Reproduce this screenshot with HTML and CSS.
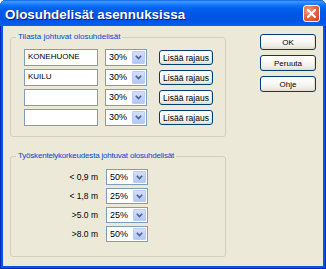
FILE: index.html
```html
<!DOCTYPE html>
<html lang="fi">
<head>
<meta charset="utf-8">
<title>Olosuhdelisät asennuksissa</title>
<link rel="stylesheet" href="styles.css">
</head>
<body>
<div class="window">
  <div class="titlebar">
    <span class="title">Olosuhdelisät asennuksissa</span>
    <button class="close" aria-label="Sulje">
      <svg width="9" height="9" viewBox="0 0 9 9"><path d="M1 1 L8 8 M8 1 L1 8" stroke="#fff" stroke-width="2" stroke-linecap="square"/></svg>
    </button>
  </div>
  <div class="client">
    <div class="main">
      <fieldset class="group g1">
        <legend>Tilasta johtuvat olosuhdelisät</legend>
        <div class="row">
          <input class="text" value="KONEHUONE">
          <div class="combo"><span class="val">30%</span><span class="drop"><svg width="7" height="5" viewBox="0 0 7 5"><path d="M0.8 0.8 L3.5 3.5 L6.2 0.8" fill="none" stroke="#4D6185" stroke-width="1.6"/></svg></span></div>
          <button class="btn small">Lisää rajaus</button>
        </div>
        <div class="row">
          <input class="text" value="KUILU">
          <div class="combo"><span class="val">30%</span><span class="drop"><svg width="7" height="5" viewBox="0 0 7 5"><path d="M0.8 0.8 L3.5 3.5 L6.2 0.8" fill="none" stroke="#4D6185" stroke-width="1.6"/></svg></span></div>
          <button class="btn small">Lisää rajaus</button>
        </div>
        <div class="row">
          <input class="text" value="">
          <div class="combo"><span class="val">30%</span><span class="drop"><svg width="7" height="5" viewBox="0 0 7 5"><path d="M0.8 0.8 L3.5 3.5 L6.2 0.8" fill="none" stroke="#4D6185" stroke-width="1.6"/></svg></span></div>
          <button class="btn small">Lisää rajaus</button>
        </div>
        <div class="row">
          <input class="text" value="">
          <div class="combo"><span class="val">30%</span><span class="drop"><svg width="7" height="5" viewBox="0 0 7 5"><path d="M0.8 0.8 L3.5 3.5 L6.2 0.8" fill="none" stroke="#4D6185" stroke-width="1.6"/></svg></span></div>
          <button class="btn small">Lisää rajaus</button>
        </div>
      </fieldset>
      <fieldset class="group g2">
        <legend>Työskentelykorkeudesta johtuvat olosuhdelisät</legend>
        <div class="row2">
          <span class="lbl">&lt; 0,9 m</span>
          <div class="combo c2"><span class="val">50%</span><span class="drop"><svg width="7" height="5" viewBox="0 0 7 5"><path d="M0.8 0.8 L3.5 3.5 L6.2 0.8" fill="none" stroke="#4D6185" stroke-width="1.6"/></svg></span></div>
        </div>
        <div class="row2">
          <span class="lbl">&lt; 1,8 m</span>
          <div class="combo c2"><span class="val">25%</span><span class="drop"><svg width="7" height="5" viewBox="0 0 7 5"><path d="M0.8 0.8 L3.5 3.5 L6.2 0.8" fill="none" stroke="#4D6185" stroke-width="1.6"/></svg></span></div>
        </div>
        <div class="row2">
          <span class="lbl">&gt;5.0 m</span>
          <div class="combo c2"><span class="val">25%</span><span class="drop"><svg width="7" height="5" viewBox="0 0 7 5"><path d="M0.8 0.8 L3.5 3.5 L6.2 0.8" fill="none" stroke="#4D6185" stroke-width="1.6"/></svg></span></div>
        </div>
        <div class="row2">
          <span class="lbl">&gt;8.0 m</span>
          <div class="combo c2"><span class="val">50%</span><span class="drop"><svg width="7" height="5" viewBox="0 0 7 5"><path d="M0.8 0.8 L3.5 3.5 L6.2 0.8" fill="none" stroke="#4D6185" stroke-width="1.6"/></svg></span></div>
        </div>
      </fieldset>
    </div>
    <div class="side">
      <button class="btn big">OK</button>
      <button class="btn big">Peruuta</button>
      <button class="btn big">Ohje</button>
    </div>
  </div>
</div>
</body>
</html>
```

FILE: styles.css
```css
* { box-sizing: border-box; }
html, body { margin: 0; padding: 0; background: #ffffff; }
body { font-family: "Liberation Sans", Arial, sans-serif; font-size: 8px; color: #000; }

.window {
  width: 326px;
  height: 269px;
  display: flex;
  flex-direction: column;
  background: #0055E8;
  border-radius: 6px 6px 0 0;
  box-shadow: inset 1px 0 0 #0029B8, inset -1px 0 0 #0029B8, inset 0 -1px 0 #0029B8;
  overflow: hidden;
}

.titlebar {
  height: 26px;
  flex: none;
  display: flex;
  align-items: center;
  justify-content: space-between;
  padding: 0 6px 0 5px;
  background: linear-gradient(to bottom, #0A5FE8 0%, #3D95FF 6%, #2A8AFF 12%, #0E74FB 20%, #0063EE 32%, #0058E6 50%, #0055E3 78%, #005AEC 90%, #0062F6 100%);
}

.title {
  font-family: "Liberation Sans", Arial, sans-serif;
  font-weight: bold;
  font-size: 13.4px;
  color: #fff;
  text-shadow: 1px 1px 0 #0A1E80;
  padding-top: 2px;
}

.close {
  width: 17px;
  height: 17px;
  padding: 0;
  margin-top: 1px;
  border: 1px solid #fff;
  border-radius: 3px;
  background: radial-gradient(circle at 30% 30%, #F0A27F 0%, #E26A45 45%, #C7401F 100%);
  display: flex;
  align-items: center;
  justify-content: center;
}

.client {
  flex: 1;
  margin: 0 3px 3px 3px;
  background: #ECE9D8;
  display: flex;
  justify-content: space-between;
  padding: 6px 7px 9px 7px;
}

.main {
  width: 216px;
  display: flex;
  flex-direction: column;
  gap: 14px;
}

.group {
  margin: 0;
  border: 1px solid #D0D0BF;
  border-radius: 3px;
  min-width: 0;
}

.group legend {
  color: #0046D5;
  font-size: 8px;
  line-height: 10px;
  padding: 0 2px;
  margin-left: -8px;
}

.g2 legend { letter-spacing: -0.2px; }

.g1 {
  padding: 7px 0 10px 13px;
  display: flex;
  flex-direction: column;
  gap: 3px;
}

.g2 {
  flex: 1;
  padding: 8px 0 0 13px;
  display: flex;
  flex-direction: column;
  gap: 3px;
}

.row {
  height: 17px;
  display: flex;
  align-items: center;
}

.text {
  width: 74px;
  height: 17px;
  border: 1px solid #7F9DB9;
  background: #fff;
  font-family: "Liberation Sans", Arial, sans-serif;
  font-size: 8px;
  padding: 0 0 2px 3px;
  margin: 0 7px 0 0;
  color: #000;
  outline: none;
}

.combo {
  width: 42px;
  height: 17px;
  border: 1px solid #7F9DB9;
  background: #fff;
  display: flex;
  align-items: stretch;
  justify-content: space-between;
  padding: 1px;
}

.combo .val {
  padding-left: 2px;
  line-height: 13px;
  font-size: 9px;
}

.combo .drop {
  width: 13px;
  border-radius: 1px;
  background: linear-gradient(to bottom, #D3E0FC 0%, #C1D3FB 50%, #B2C7F6 100%);
  border: 1px solid #B9CCF6;
  display: flex;
  align-items: center;
  justify-content: center;
}

.c2 { height: 16px; }
.c2 .val { line-height: 12px; }

.btn {
  font-family: "Liberation Sans", Arial, sans-serif;
  font-size: 8px;
  color: #000;
  padding: 0;
  border: 1px solid #003C74;
  border-radius: 3px;
  background: linear-gradient(to bottom, #FFFFFF 0%, #F8F8F5 45%, #EEEDE6 80%, #DCDAD0 100%);
  box-shadow: inset -1px -1px 0 #E3E0D4;
}

.small {
  width: 54px;
  height: 15px;
  margin-left: 12px;
  font-size: 8.5px;
}

.row2 {
  height: 16px;
  display: flex;
  align-items: center;
}

.lbl {
  width: 75px;
  text-align: right;
  padding-right: 1px;
  margin-right: 7px;
  font-size: 8.5px;
}

.side {
  width: 56px;
  display: flex;
  flex-direction: column;
  gap: 5px;
  padding-top: 2px;
}

.big {
  width: 56px;
  height: 16px;
}
```
